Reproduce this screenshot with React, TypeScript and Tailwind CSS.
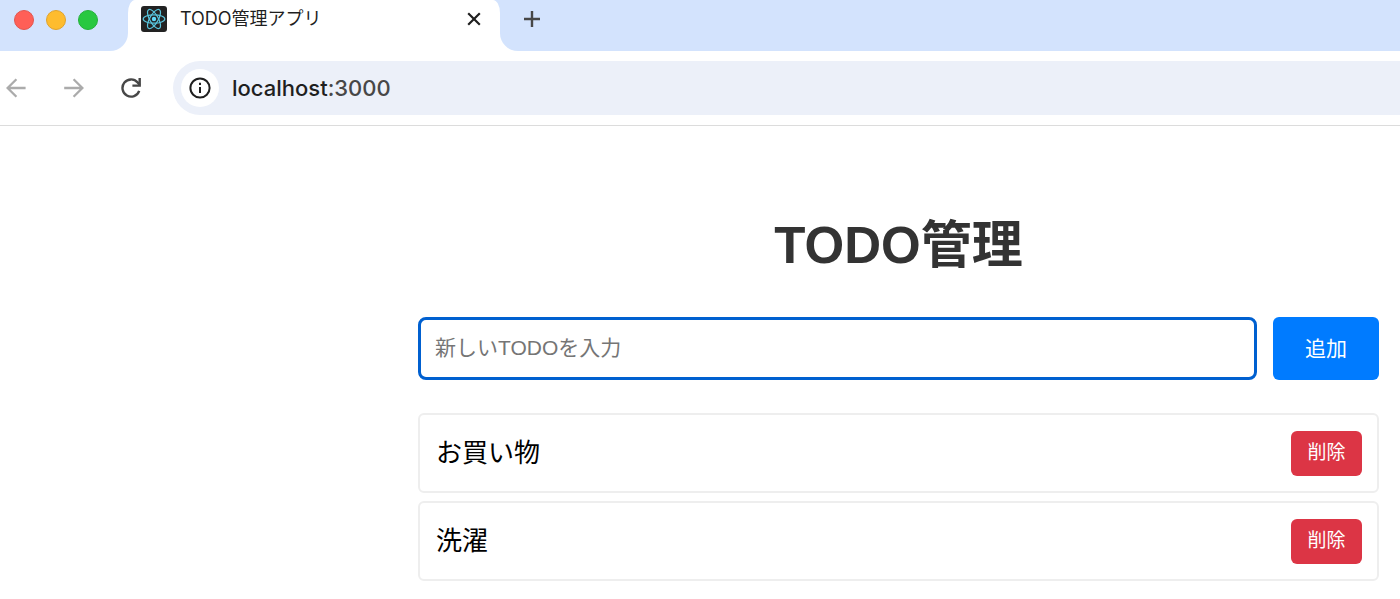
import { useState } from "react";
import type { FormEvent } from "react";

type Todo = { id: number; title: string };

function ReactLogo() {
  return (
    <svg viewBox="0 0 26 26" className="size-[26px] shrink-0" fill="none" aria-hidden="true">
      <rect width="26" height="26" rx="3" fill="#222222" />
      <g stroke="#58c4dc" strokeWidth="1.2">
        <ellipse cx="13" cy="13" rx="10.8" ry="4.2" />
        <ellipse cx="13" cy="13" rx="10.8" ry="4.2" transform="rotate(60 13 13)" />
        <ellipse cx="13" cy="13" rx="10.8" ry="4.2" transform="rotate(120 13 13)" />
      </g>
      <circle cx="13" cy="13" r="2.2" fill="#61dafb" />
    </svg>
  );
}

function TabStrip() {
  return (
    <div className="flex h-[51px] bg-white">
      <div className="flex w-32 shrink-0 items-start gap-3 rounded-br-[18px] bg-[#d3e3fd] pt-[10px] pl-[14px]">
        <span className="size-5 rounded-full border border-[#e2554e] bg-[#ff5f57]" />
        <span className="size-5 rounded-full border border-[#e0a32c] bg-[#febc2e]" />
        <span className="size-5 rounded-full border border-[#25b13a] bg-[#28c840]" />
      </div>
      <div className="w-[372px] shrink-0 bg-linear-to-b from-[#d3e3fd] from-50% to-white to-50%">
        <div className="flex h-full items-start rounded-tl-[7px_13px] rounded-tr-[7px_13px] bg-white pt-[6px] pr-4 pl-[13px]">
          <ReactLogo />
          <span className="ml-[13px] flex-1 font-['Inter','Noto_Sans_CJK_JP',sans-serif] text-[18px] leading-[26px] text-[#1f1f1f]">
            TODO管理アプリ
          </span>
          <button type="button" aria-label="タブを閉じる" className="mt-[3px] flex size-5 items-center justify-center">
            <svg viewBox="0 0 14 14" className="size-[14px]" stroke="#1f1f1f" strokeWidth="2.2" aria-hidden="true">
              <path d="M1.2 1.2 12.8 12.8M12.8 1.2 1.2 12.8" />
            </svg>
          </button>
        </div>
      </div>
      <div className="flex flex-1 items-start rounded-bl-[18px] bg-[#d3e3fd] pt-[9px] pl-[22px]">
        <button type="button" aria-label="新しいタブ" className="flex size-5 items-center justify-center">
          <svg viewBox="0 0 16 16" className="size-4" stroke="#474747" strokeWidth="2.4" aria-hidden="true">
            <path d="M8 0V16M0 8H16" />
          </svg>
        </button>
      </div>
    </div>
  );
}

function Toolbar() {
  return (
    <div className="flex h-[75px] items-center border-b border-[#dcdcdc] bg-white">
      <button type="button" aria-label="戻る" className="ml-[6px] size-5">
        <svg viewBox="0 0 20 20" className="size-5" fill="none" stroke="#ababab" strokeWidth="2.3" aria-hidden="true">
          <path d="M19.6 10H1.8M10.4 1.2 1.6 10l8.8 8.8" />
        </svg>
      </button>
      <button type="button" aria-label="進む" className="ml-[38px] size-5">
        <svg viewBox="0 0 20 20" className="size-5" fill="none" stroke="#ababab" strokeWidth="2.3" aria-hidden="true">
          <path d="M.2 10H18M9.6 1.2 18.4 10l-8.8 8.8" />
        </svg>
      </button>
      <button type="button" aria-label="再読み込み" className="ml-[37px] size-5">
        <svg viewBox="0 0 20 20" className="size-5" fill="none" stroke="#474747" strokeWidth="2.4" aria-hidden="true">
          <path d="M18.2 12.9A8.6 8.6 0 1 1 16.6 4.4L18.8 7" />
          <path d="M18.7 0V7.6H11.4" />
        </svg>
      </button>
      <div className="ml-8 flex h-[54px] flex-1 items-center rounded-l-full bg-[#ecf0f9] pl-2">
        <button type="button" aria-label="サイト情報" className="flex size-[38px] shrink-0 items-center justify-center rounded-full bg-white">
          <svg viewBox="0 0 22 22" className="size-[22px]" fill="none" stroke="#1f1f1f" strokeWidth="2" aria-hidden="true">
            <circle cx="11" cy="11" r="9.6" />
            <path d="M11 10v6M11 5.8v2.2" />
          </svg>
        </button>
        <span className="ml-[13px] font-['Inter',sans-serif] text-[22px] leading-7 font-medium text-[#474747]">
          <span className="text-[#1f1f1f]">localhost</span>:3000
        </span>
      </div>
    </div>
  );
}

export default function App() {
  const [todos, setTodos] = useState<Todo[]>([
    { id: 1, title: "お買い物" },
    { id: 2, title: "洗濯" },
  ]);
  const [title, setTitle] = useState("");

  const addTodo = (event: FormEvent) => {
    event.preventDefault();
    if (!title.trim()) return;
    setTodos([...todos, { id: Date.now(), title: title.trim() }]);
    setTitle("");
  };

  return (
    <div className="min-h-screen bg-white font-['Liberation_Sans','Noto_Sans_CJK_JP',sans-serif]" lang="ja">
      <header>
        <TabStrip />
        <Toolbar />
      </header>
      <main className="mr-[21px] ml-auto max-w-[961px] pt-[87px] pb-5">
        <h1 className="text-center text-[51px] leading-[66px] font-bold text-[#333333]">TODO管理</h1>
        <form onSubmit={addTodo} className="mt-[38px] flex gap-4">
          <input
            type="text"
            aria-label="新しいTODO"
            placeholder="新しいTODOを入力"
            value={title}
            onChange={(event) => setTitle(event.target.value)}
            className="h-[63px] min-w-0 flex-1 rounded-lg border-3 border-[#0060d0] px-[14px] pb-[2px] text-[21px] text-black outline-none placeholder:text-[#757575]"
          />
          <button type="submit" className="w-[106px] rounded-md bg-[#007bff] text-[21px] text-white">
            追加
          </button>
        </form>
        <ul className="mt-[33px] flex flex-col gap-2">
          {todos.map((todo) => (
            <li key={todo.id} className="flex h-20 items-center justify-between rounded-md border-2 border-[#eeeeee] pr-[15px] pl-4">
              <span className="text-[26px] leading-9 text-black">{todo.title}</span>
              <button
                type="button"
                onClick={() => setTodos(todos.filter((item) => item.id !== todo.id))}
                className="h-[45px] w-[71px] rounded-md bg-[#dc3545] text-[19px] text-white"
              >
                削除
              </button>
            </li>
          ))}
        </ul>
      </main>
    </div>
  );
}
